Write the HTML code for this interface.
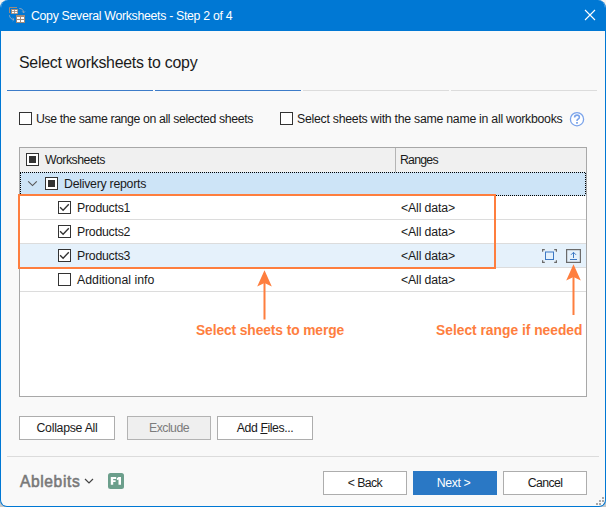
<!DOCTYPE html>
<html><head><meta charset="utf-8">
<style>
*{box-sizing:border-box;margin:0;padding:0}
html,body{width:606px;height:507px;overflow:hidden;background:linear-gradient(#f6f4f0 0,#f6f4f0 250px,#c8c8c8 250px)}
body{position:relative;font-family:"Liberation Sans",sans-serif;color:#1a1a1a}

.a{position:absolute;white-space:pre}
#win{position:absolute;left:0;top:0;width:606px;height:507px;background:#f9f9f9;border:1px solid #0078d4;border-top:none;border-radius:8px 8px 7px 7px;overflow:hidden}
#title{position:absolute;left:0;top:0;width:606px;height:31px;background:#0078d4}
.t12{font-size:12.3px;line-height:14px}
.cb{position:absolute;width:13px;height:13px;border:1px solid #333;background:#fff}
.row{position:absolute;left:20px;width:566px;height:24px;border-bottom:1px solid #dcdcdc;background:#fff}
.btn{position:absolute;height:24px;border:1px solid #adadad;background:#fff;font-size:12.3px;line-height:22px;text-align:center;color:#1b1b1b}
.seg{position:absolute;top:90px;height:1px;width:146px}
.org{color:#fe7e3e;font-weight:700;font-size:13.8px;line-height:16px}
</style></head><body>
<div id="win">
 <div id="title"></div>
</div>
<!-- title icon -->
<svg class="a" style="left:0;top:0" width="30" height="30" viewBox="0 0 30 30">
 <path d="M9.5 13V7.5H17" fill="none" stroke="#9d8a7c" stroke-width="1"/>
 <rect x="11" y="9" width="7" height="5" fill="#9d8a7c"/>
 <rect x="12" y="10" width="2.2" height="1.2" fill="#fff"/><rect x="15" y="10" width="2.2" height="1.2" fill="#fff"/>
 <rect x="12" y="12" width="2.2" height="1.2" fill="#fff"/><rect x="15" y="12" width="2.2" height="1.2" fill="#fff"/>
 <path d="M19.3 8.5A4.3 4.3 0 0 1 23.6 12.6M22.2 11.4L23.6 12.9L25 11.4" fill="none" stroke="#98a8bc" stroke-width="0.9"/>
 <path d="M9.5 15.2A4.3 4.3 0 0 0 13.8 19.5M12.6 18.1L14.1 19.5L12.6 20.9" fill="none" stroke="#98a8bc" stroke-width="0.9"/>
 <rect x="16" y="15" width="9" height="8" fill="#9d8a7c"/>
 <rect x="17" y="17" width="3" height="2" fill="#fff"/><rect x="21" y="17" width="3" height="2" fill="#fff"/>
 <rect x="17" y="20" width="3" height="2" fill="#fff"/><rect x="21" y="20" width="3" height="2" fill="#fff"/>
</svg>
<div class="a" style="left:31px;top:9px;font-size:12.3px;letter-spacing:-0.3px;line-height:15px;color:#fff">Copy Several Worksheets - Step 2 of 4</div>
<svg class="a" style="left:584px;top:9px" width="12" height="12" viewBox="0 0 12 12"><path d="M1 1L11 11M11 1L1 11" stroke="#fff" stroke-width="1.1"/></svg>

<div class="a" style="left:19px;top:54px;font-size:15.9px;letter-spacing:-0.25px;line-height:18px;color:#1b1b1b">Select worksheets to copy</div>
<div class="seg" style="left:7px;background:#3d7cc9"></div>
<div class="seg" style="left:155px;background:#3d7cc9"></div>
<div class="seg" style="left:303px;background:#dcdcdc"></div>
<div class="seg" style="left:451px;background:#dcdcdc"></div>

<div class="cb" style="left:19px;top:112px"></div>
<div class="a t12" style="left:36px;top:112px;letter-spacing:-0.375px">Use the same range on all selected sheets</div>
<div class="cb" style="left:280px;top:112px"></div>
<div class="a t12" style="left:297px;top:112px;letter-spacing:-0.26px">Select sheets with the same name in all workbooks</div>
<svg class="a" style="left:0;top:0" width="606" height="507"><circle cx="577" cy="119.2" r="6.6" fill="#fff" stroke="#7aa3ea" stroke-width="1.3"/><path d="M574.6 117.4Q574.6 115.1 577 115.1Q579.4 115.1 579.4 117.3Q579.4 118.6 577.9 119.3Q577 119.8 577 120.9" fill="none" stroke="#7aa3ea" stroke-width="1.6"/><rect x="576.1" y="122" width="1.8" height="1.7" fill="#7aa3ea"/></svg>

<!-- list -->
<div class="a" style="left:19px;top:147px;width:568px;height:250px;border:1px solid #a8a8a8;background:#fff"></div>
<div class="a" style="left:20px;top:148px;width:566px;height:24px;background:#f0f0f0"></div>
<div class="a" style="left:395px;top:148px;width:1px;height:24px;background:#b4b4b4"></div>
<div class="cb" style="left:26px;top:153px"><div style="position:absolute;left:2px;top:2px;width:7px;height:7px;background:#333"></div></div>
<div class="a t12" style="left:45px;top:153px;letter-spacing:-0.48px">Worksheets</div>
<div class="a t12" style="left:400px;top:153px;letter-spacing:-0.76px">Ranges</div>

<div class="a" style="left:20px;top:172px;width:566px;height:24px;background:#cde4f7"></div>
<div class="a" style="left:20px;top:172px;width:566px;height:1px;background:repeating-linear-gradient(90deg,#000 0 1px,transparent 1px 2px)"></div>
<div class="a" style="left:20px;top:195px;width:566px;height:1px;background:repeating-linear-gradient(90deg,#000 0 1px,transparent 1px 2px)"></div>
<div class="a" style="left:20px;top:173px;width:1px;height:22px;background:repeating-linear-gradient(180deg,#000 0 1px,transparent 1px 2px)"></div>
<div class="a" style="left:585px;top:173px;width:1px;height:22px;background:repeating-linear-gradient(180deg,#000 0 1px,transparent 1px 2px)"></div>
<svg class="a" style="left:27px;top:180px" width="11" height="8" viewBox="0 0 11 8"><path d="M1.2 1.4L5.5 5.6L9.8 1.4" fill="none" stroke="#555" stroke-width="1.1"/></svg>
<div class="cb" style="left:45px;top:177px"><div style="position:absolute;left:2px;top:2px;width:7px;height:7px;background:#333"></div></div>
<div class="a t12" style="left:64px;top:177px;letter-spacing:-0.25px">Delivery reports</div>

<div class="row" style="top:196px"></div>
<div class="row" style="top:220px"></div>
<div class="row" style="top:244px;background:#e5f1fb"></div>
<div class="row" style="top:268px"></div>
<div class="a" style="left:20px;top:243px;width:566px;height:1px;background:#dcdcdc"></div>

<div class="cb" style="left:58px;top:201px"><svg style="position:absolute;left:0;top:0" width="11" height="11"><path d="M1.1 5.3L4.1 8.2L9.8 2.2" fill="none" stroke="#333" stroke-width="1.35"/></svg></div>
<div class="a t12" style="left:77px;top:201px;letter-spacing:-0.25px">Products1</div>
<div class="a t12" style="left:401px;top:201px;letter-spacing:-0.14px">&lt;All data&gt;</div>
<div class="cb" style="left:58px;top:225px"><svg style="position:absolute;left:0;top:0" width="11" height="11"><path d="M1.1 5.3L4.1 8.2L9.8 2.2" fill="none" stroke="#333" stroke-width="1.35"/></svg></div>
<div class="a t12" style="left:77px;top:225px;letter-spacing:-0.25px">Products2</div>
<div class="a t12" style="left:401px;top:225px;letter-spacing:-0.14px">&lt;All data&gt;</div>
<div class="cb" style="left:58px;top:249px"><svg style="position:absolute;left:0;top:0" width="11" height="11"><path d="M1.1 5.3L4.1 8.2L9.8 2.2" fill="none" stroke="#333" stroke-width="1.35"/></svg></div>
<div class="a t12" style="left:77px;top:249px;letter-spacing:-0.25px">Products3</div>
<div class="a t12" style="left:401px;top:249px;letter-spacing:-0.14px">&lt;All data&gt;</div>
<div class="cb" style="left:58px;top:273px"></div>
<div class="a t12" style="left:77px;top:273px">Additional info</div>
<div class="a t12" style="left:401px;top:273px;letter-spacing:-0.14px">&lt;All data&gt;</div>

<!-- row icons -->
<svg class="a" style="left:542px;top:249px" width="15" height="14" viewBox="0 0 15 14">
 <path d="M0.6 2.8V0.6H2.8M12.2 0.6H14.4V2.8M14.4 11.2V13.4H12.2M2.8 13.4H0.6V11.2" fill="none" stroke="#6b6b6b" stroke-width="1.2"/>
 <rect x="3.5" y="3" width="8" height="7.5" fill="none" stroke="#3c78c3" stroke-width="1"/>
</svg>
<svg class="a" style="left:566px;top:249px" width="15" height="14" viewBox="0 0 15 14">
 <rect x="0.6" y="0.6" width="13.8" height="12.8" fill="none" stroke="#6b6b6b" stroke-width="1.2"/>
 <path d="M7.5 3.5V9M5 5.8L7.5 3.3L10 5.8M4 10.5H11" fill="none" stroke="#3c78c3" stroke-width="1"/>
</svg>

<!-- annotations -->
<div class="a" style="left:18px;top:194px;width:478px;height:75px;border:2px solid #fe7e3e"></div>
<svg class="a" style="left:0;top:0" width="606" height="507">
 <path d="M264.5 270.2L271.8 286.6L264.5 283L257.2 286.6Z" fill="#fe7e3e"/>
 <rect x="263.5" y="282" width="2" height="37.5" fill="#fe7e3e"/>
 <path d="M573.5 264.2L580.8 280.6L573.5 277L566.2 280.6Z" fill="#fe7e3e"/>
 <rect x="572.5" y="276" width="2" height="39" fill="#fe7e3e"/>
</svg>
<div class="a org" style="left:196px;top:323px;letter-spacing:-0.1px">Select sheets to merge</div>
<div class="a org" style="left:436px;top:323px">Select range if needed</div>

<!-- buttons -->
<div class="btn" style="left:19px;top:416px;width:96px;letter-spacing:-0.27px">Collapse All</div>
<div class="btn" style="left:127px;top:416px;width:84px;background:#efefef;border-color:#b3b3b3;color:#7c7c7c;letter-spacing:-0.53px">Exclude</div>
<div class="btn" style="left:217px;top:416px;width:96px;letter-spacing:-0.42px">Add <u>F</u>iles...</div>

<div class="a" style="left:7px;top:456px;width:592px;height:1px;background:#dcdcdc"></div>
<div class="a" style="left:20px;top:473px;font-size:15.6px;letter-spacing:0.6px;line-height:18px;font-weight:400;-webkit-text-stroke:0.55px #787878;color:#787878">Ablebits</div>
<svg class="a" style="left:84px;top:477px" width="10" height="8" viewBox="0 0 10 8"><path d="M1 2L5 6L9 2" fill="none" stroke="#444" stroke-width="1.2"/></svg>
<svg class="a" style="left:0;top:0" width="606" height="507"><rect x="108" y="473" width="16" height="16" rx="2.5" fill="#6c9f8c"/>
<path d="M110.8 477H116.2V479H113.2V480.2H115.6V482H113.2V484.8H110.8Z" fill="#fff"/>
<path d="M118.5 477H121V484.8H118.5V479.6L116.9 480.3V478.2Z" fill="#fff"/></svg>

<div class="btn" style="left:323px;top:471px;width:84px;letter-spacing:-0.6px">&lt; Back</div>
<div class="btn" style="left:413px;top:471px;width:84px;background:#2a78c5;border-color:#2a78c5;color:#fff;letter-spacing:-0.4px;padding-right:3px">Next &gt;</div>
<div class="btn" style="left:503px;top:471px;width:84px;letter-spacing:-0.6px">Cancel</div>
<svg class="a" style="left:0;top:0" width="606" height="507"><g fill="#a8a8a8"><rect x="602" y="497" width="2" height="2"/><rect x="599" y="500" width="2" height="2"/><rect x="602" y="500" width="2" height="2"/><rect x="596" y="503" width="2" height="2"/><rect x="599" y="503" width="2" height="2"/></g></svg>
</body></html>
